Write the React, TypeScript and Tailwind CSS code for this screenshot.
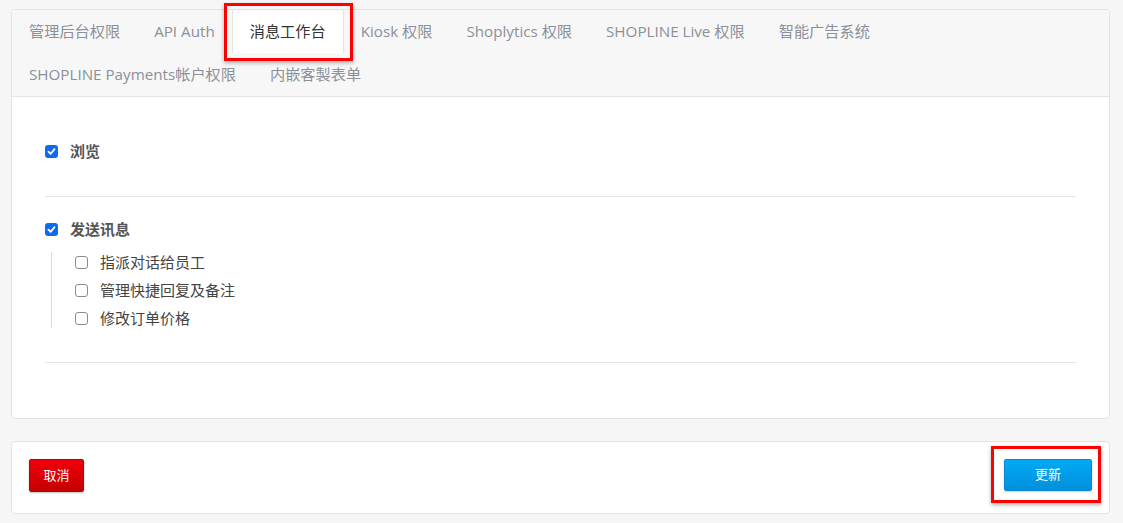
import React from 'react';

const tabs = [
  '管理后台权限',
  'API Auth',
  '消息工作台',
  'Kiosk 权限',
  'Shoplytics 权限',
  'SHOPLINE Live 权限',
  '智能广告系统',
  'SHOPLINE Payments帐户权限',
  '内嵌客製表单',
];

const Box: React.FC<{ checked?: boolean }> = ({ checked }) =>
  checked ? (
    <span className="w-[13px] h-[13px] rounded-[3px] bg-[#0b6cf2] flex items-center justify-center shrink-0">
      <svg width="9" height="9" viewBox="0 0 10 10">
        <path d="M1.6 5.2 L4 7.6 L8.4 2.4" fill="none" stroke="#fff" strokeWidth="1.9" strokeLinecap="round" strokeLinejoin="round" />
      </svg>
    </span>
  ) : (
    <span className="w-[13px] h-[13px] rounded-[3px] border border-[#8a8a8a] bg-white shrink-0" />
  );

const subItems = ['指派对话给员工', '管理快捷回复及备注', '修改订单价格'];

export default function App() {
  return (
    <div
      className="relative w-[1123px] min-h-[523px] bg-[#f6f6f6] pt-[9px] pl-[11px] pr-[13px] pb-[8px]"
      style={{ fontFamily: '"Open Sans", "Noto Sans CJK SC", sans-serif' }}
    >
      {/* Permission card */}
      <div className="bg-white border border-[#e3e3e3] rounded-[4px] overflow-hidden">
        {/* Tabs */}
        <div className="flex flex-wrap bg-[#f7f7f7] border-b border-[#e3e3e3]">
          {tabs.map((tab) => {
            const active = tab === '消息工作台';
            return (
              <div
                key={tab}
                className={`h-[43px] px-[17px] flex items-center text-[15.2px] whitespace-nowrap ${
                  active
                    ? 'bg-white text-[#333] border-x border-[#e3e3e3] px-[16px]'
                    : 'text-[#8b909a]'
                }`}
              >
                {tab}
              </div>
            );
          })}
        </div>

        {/* Content */}
        <div className="px-[33px] pb-[55px]">
          <div className="pt-[44px] pb-[35px] border-b border-[#e6e6e6]">
            <label className="h-5 flex items-center gap-3 text-[15px] font-bold text-[#555]">
              <Box checked />
              浏览
            </label>
          </div>

          <div className="pt-[22px] pb-[34px] border-b border-[#e6e6e6]">
            <label className="h-5 flex items-center gap-3 text-[15px] font-bold text-[#555]">
              <Box checked />
              发送讯息
            </label>
            <div className="mt-[13px] ml-[6px] border-l border-[#dcdcdc] pl-[23px] flex flex-col gap-2">
              {subItems.map((item) => (
                <label key={item} className="h-5 flex items-center gap-3 text-[15px] text-[#444]">
                  <Box />
                  {item}
                </label>
              ))}
            </div>
          </div>
        </div>
      </div>

      {/* Footer actions */}
      <div className="mt-[22px] bg-white border border-[#e3e3e3] rounded-[4px] px-[17px] pt-[17px] pb-[21px] flex items-start justify-between">
        <button className="w-[55px] h-[33px] rounded-[2px] border border-[#b80000] bg-gradient-to-b from-[#f2000c] to-[#c30000] text-white text-[13px] shadow-[0_1px_2px_rgba(0,0,0,0.25)]">
          取消
        </button>
        <button className="w-[88px] h-[32px] rounded-[2px] border border-[#0a86cf] bg-gradient-to-b from-[#03a9f4] to-[#0090dc] text-white text-[13px] shadow-[0_1px_2px_rgba(0,0,0,0.2)]">
          更新
        </button>
      </div>

      {/* Annotation highlights */}
      <div className="absolute left-[224px] top-[3px] w-[129px] h-[58px] border-[3px] border-[#ff0000] shadow-[0_2px_4px_rgba(0,0,0,0.3)] pointer-events-none" />
      <div className="absolute left-[991px] top-[446px] w-[110px] h-[57px] border-[3px] border-[#ff0000] shadow-[0_2px_4px_rgba(0,0,0,0.3)] pointer-events-none" />
    </div>
  );
}
